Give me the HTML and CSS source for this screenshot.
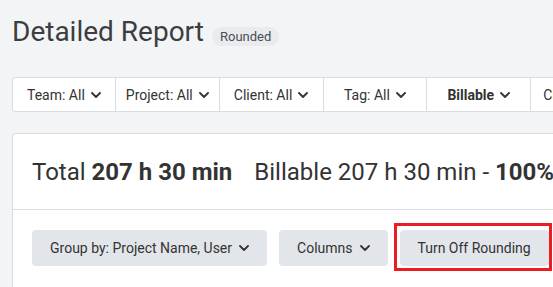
FILE: index.html
```html
<!DOCTYPE html>
<html>
<head>
<meta charset="utf-8">
<link rel="stylesheet" href="styles.css">
</head>
<body>
<div class="page">
  <header class="header">
    <h1 class="title">Detailed Report</h1>
    <span class="badge">Rounded</span>
  </header>

  <div class="filters">
    <div class="filter">Team: All <svg class="chev" viewBox="0 0 10 6"><polyline points="1,1 5,5 9,1"/></svg></div>
    <div class="filter">Project: All <svg class="chev" viewBox="0 0 10 6"><polyline points="1,1 5,5 9,1"/></svg></div>
    <div class="filter">Client: All <svg class="chev" viewBox="0 0 10 6"><polyline points="1,1 5,5 9,1"/></svg></div>
    <div class="filter">Tag: All <svg class="chev" viewBox="0 0 10 6"><polyline points="1,1 5,5 9,1"/></svg></div>
    <div class="filter bold">Billable <svg class="chev" viewBox="0 0 10 6"><polyline points="1,1 5,5 9,1"/></svg></div>
    <div class="filter last">Clear filters</div>
  </div>

  <section class="card">
    <div class="totals">
      <span class="total">Total <b>207 h 30 min</b></span>
      <span class="billable">Billable 207 h 30 min - <b>100%</b></span>
    </div>
    <div class="actions">
      <button class="btn">Group by: Project Name, User <svg class="chev" viewBox="0 0 10 6"><polyline points="1,1 5,5 9,1"/></svg></button>
      <button class="btn">Columns <svg class="chev" viewBox="0 0 10 6"><polyline points="1,1 5,5 9,1"/></svg></button>
      <div class="highlight-wrap">
        <button class="btn">Turn Off Rounding</button>
        <span class="highlight"></span>
      </div>
    </div>
  </section>
</div>
</body>
</html>
```

FILE: styles.css
```css
* { box-sizing: border-box; }

html, body {
  margin: 0;
  padding: 0;
  background: #f3f4f6;
  overflow: hidden;
}

body {
  font-family: Roboto, "Liberation Sans", sans-serif;
  color: #333639;
  width: 553px;
  height: 287px;
}

.page {
  padding-left: 12px;
  width: 700px;
}

.header {
  display: flex;
  align-items: baseline;
  gap: 8px;
  padding-top: 15px;
  height: 77px;
}

.title {
  margin: 0;
  font-size: 28px;
  font-weight: 400;
  line-height: 33px;
  color: #3b3e42;
}

.badge {
  display: inline-block;
  font-size: 13px;
  line-height: 15px;
  padding: 2px 8px;
  border-radius: 10px;
  background: #e9ebee;
  color: #4a4e53;
}

.filters {
  display: flex;
  height: 35px;
  background: #fff;
  border: 1px solid #d9dce0;
  border-radius: 3px;
  width: 640px;
}

.filter {
  width: 104px;
  display: flex;
  align-items: center;
  justify-content: center;
  gap: 6px;
  font-size: 14px;
  border-right: 1px solid #d9dce0;
  color: #333;
}

.filter:first-child { width: 103px; }

.filter.bold { font-weight: 700; }

.filter.last {
  border-right: none;
  justify-content: flex-start;
  padding-left: 12px;
  width: 120px;
}

.chev {
  width: 10px;
  height: 6px;
  fill: none;
  stroke: #333;
  stroke-width: 1.8;
  stroke-linecap: round;
  stroke-linejoin: round;
  flex: none;
}

.card {
  margin-top: 21px;
  background: #fff;
  border: 1px solid #d9dce0;
  border-radius: 4px;
  width: 680px;
  height: 200px;
}

.totals {
  display: flex;
  align-items: center;
  gap: 22px;
  height: 76px;
  padding-left: 19px;
  font-size: 24px;
  color: #333;
  border-bottom: 1px solid #d9dce0;
}

.totals b { font-weight: 700; }

.actions {
  display: flex;
  gap: 12px;
  padding: 20px 0 0 19px;
}

.btn {
  display: flex;
  align-items: center;
  gap: 7px;
  height: 36px;
  padding: 0 18px;
  border: none;
  border-radius: 4px;
  background: #e2e6ea;
  font-family: Roboto, "Liberation Sans", sans-serif;
  font-size: 14px;
  color: #333;
}

.highlight-wrap {
  position: relative;
}

.highlight {
  position: absolute;
  left: -6px;
  top: -7px;
  right: -3px;
  bottom: -5px;
  border: 3px solid #ec1c24;
  pointer-events: none;
}
```
